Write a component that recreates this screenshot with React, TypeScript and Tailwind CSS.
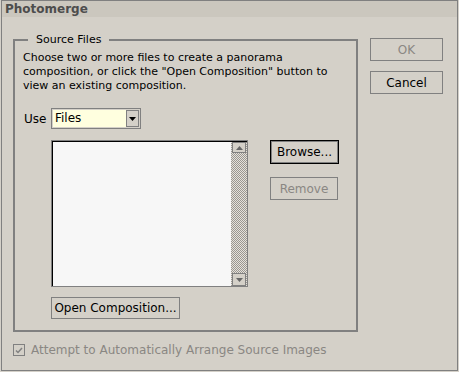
const Tri = ({ down = false, color = "#000" }: { down?: boolean; color?: string }) => (
  <svg width="7" height="4" viewBox="0 0 7 4" className="block">
    {down ? (
      <polygon points="0,0 7,0 3.5,4" fill={color} />
    ) : (
      <polygon points="0,4 7,4 3.5,0" fill={color} />
    )}
  </svg>
);

export default function App() {
  return (
    <div className="w-[459px] h-[372px] bg-[#d4d0c8] font-['DejaVu_Sans','Liberation_Sans',sans-serif] text-[11px] leading-[14px] text-black">
      <div className="ml-[1px] w-[457px] h-[371px] border border-[#808080] flex flex-col">
        {/* title bar */}
        <div className="h-[16px] bg-[#cbc7be] pl-[3px] font-bold text-[12px] leading-[16px] text-[#4d4d4d]">
          Photomerge
        </div>

        <div className="flex pl-[11px] pt-[16px]">
          <fieldset className="w-[345px] h-[299px] border-2 border-[#808080] pl-[8px] pr-[8px]">
            <legend className="ml-[5px] px-[8px] leading-[14px]">Source Files</legend>
            <p className="mt-[4px] leading-[14px]">
              Choose two or more files to create a panorama
              <br />
              composition, or click the "Open Composition" button to
              <br />
              view an existing composition.
            </p>

            {/* Use row */}
            <div className="flex items-center mt-[15px]">
              <span className="w-[28px] pl-[1px] text-[12px]">Use</span>
              <div className="w-[90px] h-[21px] border border-[#808080] p-[1px] flex">
                <div className="flex-1 bg-[#ffffdf] pl-[2px] leading-[17px] text-[12px]">Files</div>
                <div className="w-[13px] border border-[#808080] bg-[#d4d0c8] flex items-center justify-center">
                  <Tri down />
                </div>
              </div>
            </div>

            {/* list + side buttons */}
            <div className="flex mt-[11px] ml-[28px]">
              <div className="w-[197px] h-[147px] border border-[#808080] shadow-[inset_1px_1px_0_#000] pl-[1px] pt-[1px] flex">
                <div className="flex-1 bg-[#f7f7f7]" />
                <div className="w-[16px] flex flex-col bg-[repeating-conic-gradient(#9a9690_0%_25%,#e4e1db_0%_50%)] bg-[length:2px_2px]">
                  <div className="mx-[1px] h-[11px] border border-[#808080] bg-[#d4d0c8] flex items-center justify-center">
                    <Tri color="#666" />
                  </div>
                  <div className="flex-1" />
                  <div className="mx-[1px] h-[13px] border border-[#808080] bg-[#d4d0c8] flex items-center justify-center">
                    <Tri down color="#666" />
                  </div>
                </div>
              </div>
              <div className="ml-[22px] flex flex-col">
                <button className="w-[69px] h-[24px] border border-black shadow-[inset_0_0_0_1px_#808080] text-[12px]">
                  Browse...
                </button>
                <button className="mt-[13px] w-[68px] h-[23px] border border-[#808080] text-[12px] text-[#8a8783]">
                  Remove
                </button>
              </div>
            </div>

            <button className="mt-[10px] ml-[28px] w-[129px] h-[22px] border border-[#808080] text-[12px]">
              Open Composition...
            </button>
          </fieldset>

          <div className="ml-[12px] mt-[5px] flex flex-col">
            <button className="w-[73px] h-[23px] border border-[#808080] text-[12px] text-[#8a8783]">OK</button>
            <button className="mt-[10px] w-[73px] h-[23px] border border-[#808080] text-[12px]">Cancel</button>
          </div>
        </div>

        {/* checkbox row */}
        <div className="flex items-center mt-[11px] pl-[11px] text-[12px] text-[#8a8783]">
          <div className="w-[12px] h-[12px] border border-[#808080] flex items-center justify-center">
            <svg width="8" height="7" viewBox="0 0 8 7">
              <polyline points="1,3.5 3,5.5 7,1" fill="none" stroke="#808080" strokeWidth="1.5" />
            </svg>
          </div>
          <span className="ml-[6px]">Attempt to Automatically Arrange Source Images</span>
        </div>
      </div>
    </div>
  );
}
